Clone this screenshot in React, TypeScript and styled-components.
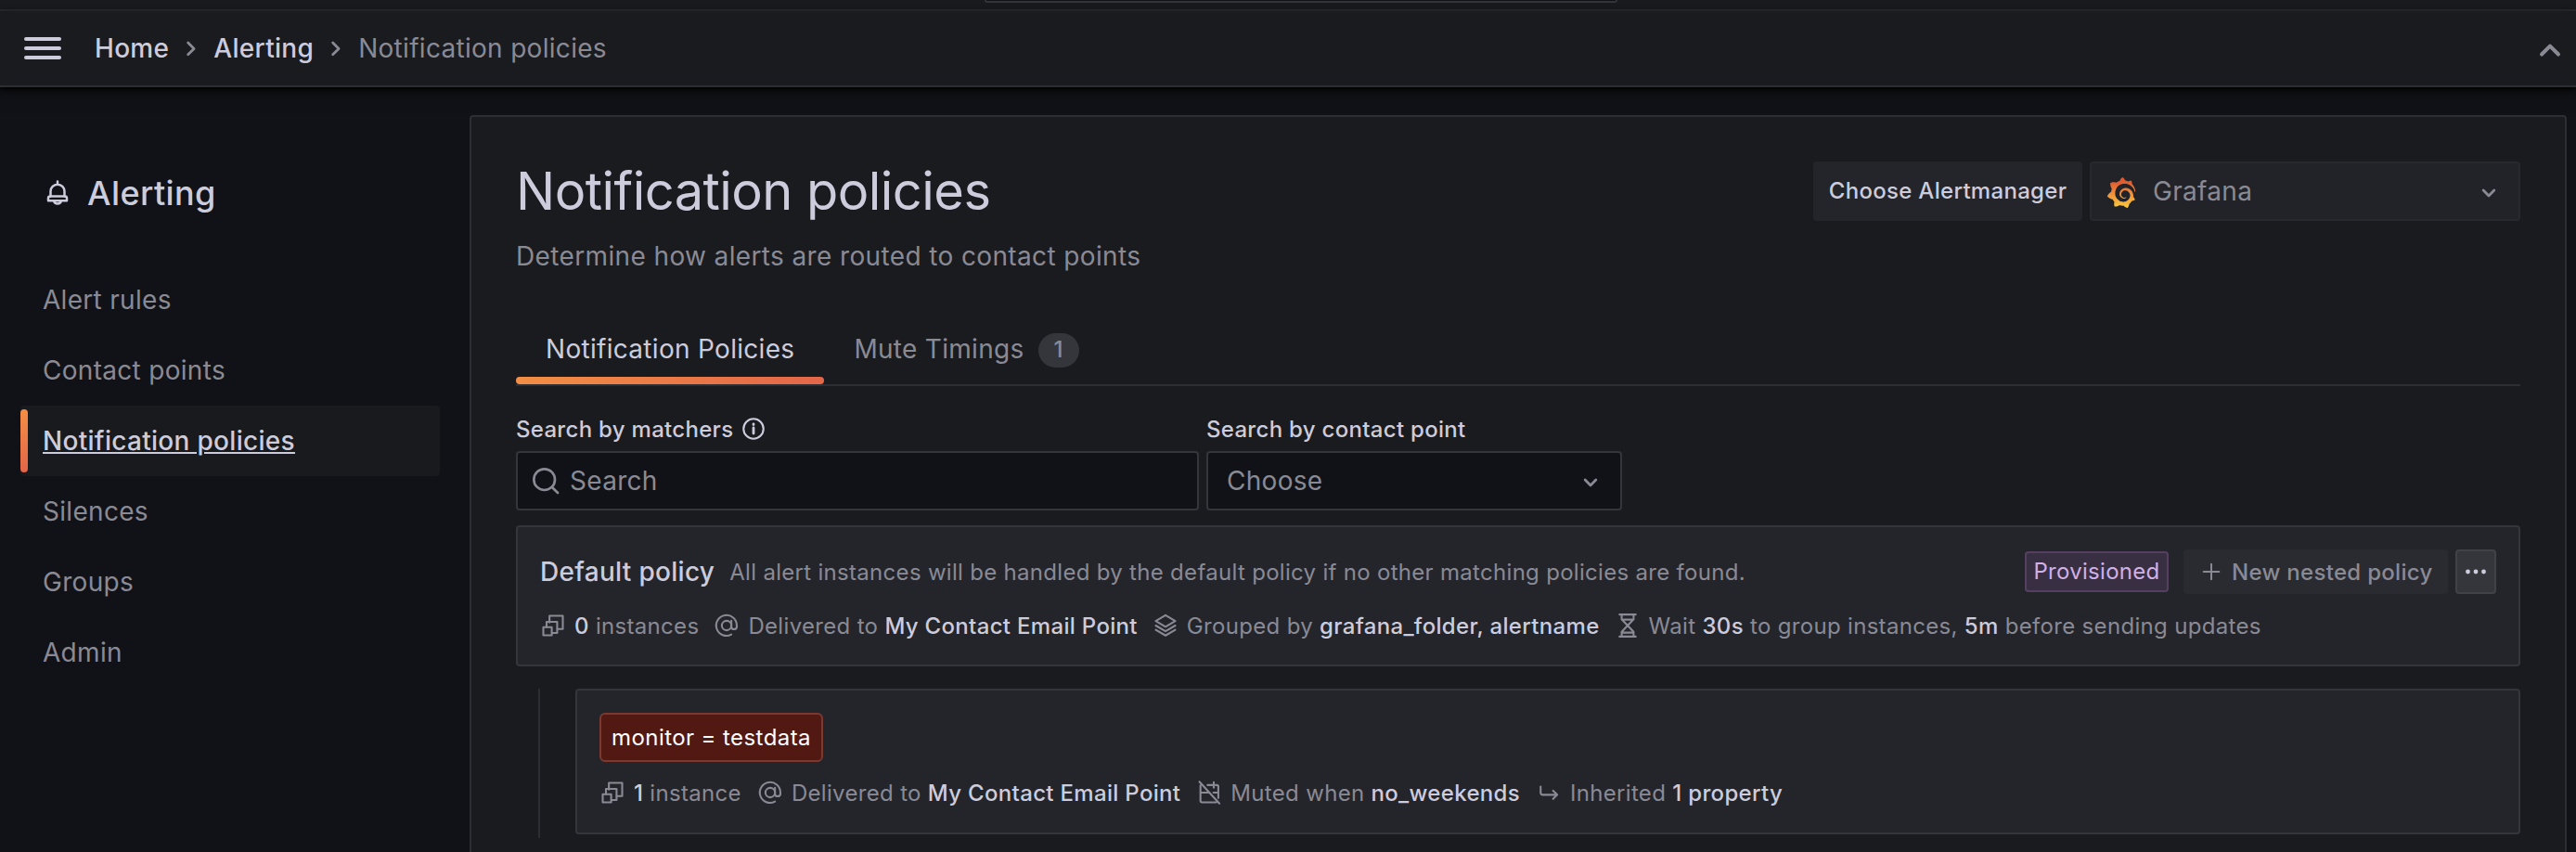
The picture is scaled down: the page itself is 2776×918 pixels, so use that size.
import React from 'react';
import styled, { createGlobalStyle, css } from 'styled-components';

const c = {
  canvas: '#111217',
  primary: '#1a1b1f',
  secondary: '#24252b',
  weak: '#2d2e33',
  medium: '#35363c',
  text: '#ccccdc',
  muted: '#8a8a95',
};

const Global = createGlobalStyle`
  * { box-sizing: border-box; }
  body { margin: 0; background: ${c.canvas}; color: ${c.text}; font-family: Inter, sans-serif; font-size: 28px; letter-spacing: 0.3px; overflow: hidden; }
  h1, h2, p { margin: 0; }
`;

const Page = styled.div`
  height: 918px;
  display: flex;
  flex-direction: column;
  overflow: hidden;
`;
const SearchStrip = styled.div`
  height: 12px;
  flex: none;
  display: flex;
  background: ${c.primary};
  border-bottom: 2px solid ${c.weak};
`;
const SearchEdge = styled.div`
  width: 682px;
  height: 3px;
  margin-left: 1061px;
  background: ${c.canvas};
  border: 2px solid ${c.medium};
  border-top: 0;
  border-radius: 0 0 4px 4px;
`;
const Toolbar = styled.header`
  height: 82px;
  flex: none;
  display: flex;
  align-items: center;
  padding: 0 12px 0 26px;
  background: ${c.primary};
  border-bottom: 2px solid ${c.weak};
  box-shadow: 0 2px 4px #000, 0 4px 16px rgba(0, 0, 0, 0.5);
  position: relative;
`;
const Menu = styled.div`
  width: 40px;
  display: grid;
  gap: 6px;
  margin-right: 36px;
  i { height: 4px; border-radius: 2px; background: ${c.text}; }
`;
const Crumbs = styled.nav`
  flex: 1;
  display: flex;
  align-items: center;
  gap: 8px;
`;
const Crumb = styled.span<{ $current?: boolean }>`
  color: ${(p) => (p.$current ? c.muted : c.text)};
  font-weight: ${(p) => (p.$current ? 400 : 500)};
`;
const Body = styled.div`
  flex: 1;
  min-height: 0;
  display: flex;
  padding: 30px 10px 0 22px;
`;
const Sidebar = styled.aside`
  width: 452px;
  margin-right: 32px;
  flex: none;
`;
const SideTitle = styled.h2`
  display: flex;
  align-items: center;
  gap: 17px;
  height: 64px;
  margin: 52px 0 45px 25px;
  font-size: 36px;
  font-weight: 500;
  letter-spacing: 0.4px;
`;
const NavItem = styled.a<{ $active?: boolean }>`
  display: flex;
  align-items: center;
  height: 76px;
  padding-left: 24px;
  color: ${c.muted};
  border-radius: 4px;
  position: relative;
  ${(p) => p.$active && css`
    color: ${c.text};
    font-weight: 500;
    text-decoration: underline;
    background: #181a1d;
    &::before {
      content: '';
      position: absolute;
      left: 0;
      top: 4px;
      bottom: 4px;
      width: 8px;
      border-radius: 4px;
      background: linear-gradient(180deg, #f28e45, #e36649);
    }
  `}
`;
const Main = styled.main`
  flex: 1;
  min-width: 0;
  padding: 48px 48px 0;
  background: ${c.primary};
  border: 2px solid ${c.weak};
  border-bottom: 0;
  border-radius: 4px 4px 0 0;
`;
const Head = styled.div`
  display: flex;
  justify-content: space-between;
`;
const Title = styled.h1`
  font-size: 56px;
  font-weight: 400;
  letter-spacing: -0.55px;
  line-height: 64px;
`;
const Subtitle = styled.p`
  margin-top: 16px;
  color: ${c.muted};
  line-height: 44px;
  letter-spacing: 0.37px;
`;
const Picker = styled.div`
  display: flex;
  gap: 8px;
`;
const PickerLabel = styled.div`
  width: 290px;
  height: 64px;
  line-height: 63px;
  text-align: center;
  font-size: 24px;
  font-weight: 500;
  background: ${c.secondary};
  border-radius: 4px;
`;
const Select = styled.div<{ $w: number; $disabled?: boolean }>`
  width: ${(p) => p.$w}px;
  height: 64px;
  display: flex;
  align-items: center;
  padding: 0 18px 0 ${(p) => (p.$disabled ? 16 : 20)}px;
  color: ${c.muted};
  background: ${(p) => (p.$disabled ? '#222328' : c.canvas)};
  border: 2px solid ${(p) => (p.$disabled ? '#28292e' : c.medium)};
  border-radius: 4px;
  span { flex: 1; }
`;
const LogoSlot = styled.div`
  padding-top: 3px;
  margin-right: 18px;
`;
const Tabs = styled.div`
  height: 78px;
  margin-top: 40px;
  display: flex;
  border-bottom: 2px solid ${c.weak};
`;
const Tab = styled.div<{ $active?: boolean }>`
  height: 76px;
  padding: 0 32px;
  display: flex;
  align-items: center;
  color: ${(p) => (p.$active ? c.text : c.muted)};
  position: relative;
  ${(p) => p.$active && css`
    &::after {
      content: '';
      position: absolute;
      left: 0;
      right: 0;
      bottom: 0;
      height: 8px;
      border-radius: 4px;
      background: linear-gradient(90deg, #f28e45, #e36649);
    }
  `}
`;
const Counter = styled.span`
  width: 44px;
  height: 37px;
  margin: 3px 0 0 15px;
  line-height: 36px;
  text-align: center;
  font-size: 24px;
  font-weight: 500;
  background: ${c.medium};
  border-radius: 19px;
`;
const Filters = styled.div`
  display: flex;
  gap: 8px;
  margin-top: 29px;
`;
const Label = styled.div`
  display: flex;
  align-items: center;
  gap: 8px;
  height: 34px;
  margin-bottom: 7px;
  font-size: 24px;
  font-weight: 500;
`;
const Input = styled.div`
  width: 736px;
  height: 64px;
  display: flex;
  align-items: center;
  gap: 10px;
  padding-left: 14px;
  color: ${c.muted};
  background: ${c.canvas};
  border: 2px solid ${c.medium};
  border-radius: 4px;
`;
const Card = styled.section`
  flex: 1;
  padding: 24px 24px 0;
  font-size: 24px;
  color: ${c.muted};
  background: ${c.secondary};
  border: 2px solid ${c.medium};
  border-radius: 4px;
`;
const RootCard = styled(Card)`
  height: 152px;
  margin-top: 16px;
`;
const CardHead = styled.div`
  display: flex;
  align-items: center;
  height: 48px;
`;
const PolicyName = styled.span`
  margin-right: 16px;
  color: ${c.text};
  font-size: 28px;
  font-weight: 500;
`;
const Spacer = styled.div`
  flex: 1;
`;
const Badge = styled.span`
  width: 155px;
  height: 44px;
  line-height: 39px;
  text-align: center;
  color: #d0b0e8;
  background: #392f42;
  border: 2px solid #56405f;
  border-radius: 4px;
`;
const NewButton = styled.span`
  width: 285px;
  height: 48px;
  margin: 0 8px 0 16px;
  padding-left: 18px;
  display: flex;
  align-items: center;
  gap: 10px;
  font-weight: 500;
  background: #2a2b30;
  border-radius: 4px;
`;
const MoreButton = styled.span`
  width: 44px;
  height: 48px;
  display: flex;
  align-items: center;
  justify-content: center;
  color: ${c.text};
  background: #35363b;
  border: 2px solid #414247;
  border-radius: 4px;
`;
const Meta = styled.div<{ $top: number; $gap?: number }>`
  display: flex;
  align-items: center;
  gap: ${(p) => p.$gap ?? 16}px;
  height: 36px;
  margin-top: ${(p) => p.$top}px;
  letter-spacing: 0.32px;
`;
const MetaItem = styled.span`
  display: flex;
  align-items: center;
  gap: 9px;
  white-space: pre;
  b { color: ${c.text}; font-weight: 500; }
`;
const Nested = styled.div`
  display: flex;
  height: 161px;
  margin: 24px 0 0 24px;
  padding: 0 0 4px 38px;
  border-left: 2px solid ${c.weak};
`;
const Matcher = styled.span`
  display: block;
  width: 241px;
  height: 53px;
  line-height: 49px;
  text-align: center;
  color: #fff;
  letter-spacing: 0.42px;
  background: #521913;
  border: 2px solid #7a3a30;
  border-radius: 6px;
`;
const Svg = styled.svg`
  flex: none;
  display: block;
`;

const paths: Record<string, React.ReactNode> = {
  right: <path d="M9.5 7.5l4.800 4.800-4.800 4.800" />,
  down: <path d="M7 11.200l5 5 5-5" />,
  up: <path d="M5.300 16.900l6.700-6.700 6.700 6.700" />,
  bell: <path d="M12 2v2M6 15v-4.500a6 6 0 0 1 12 0V15M5.500 14.800h13c1 0 1.500.8 1.500 1.700V18.500H4v-2c0-.9.5-1.700 1.500-1.700zM8.800 18.700a3.300 3.300 0 0 0 6.400 0" />,
  info: <><circle cx="12" cy="12" r="9.200" /><path d="M12 11v5.300M12 7.600v.6" strokeWidth="2.400" /></>,
  search: <><circle cx="11" cy="11" r="8.500" /><path d="M17.200 17.200l4.600 4.600" /></>,
  instances: <><path d="M8.700 9.200V3H21v12.200h-5" /><path d="M6 13.500V8.600h9.800v10.200h-4.500" /><rect x="3" y="13.500" width="7.800" height="7.500" /></>,
  at: <><circle cx="12" cy="12" r="4.400" /><path d="M16.400 7.600V13.600a2.600 2.600 0 0 0 5 0V12a9.500 9.500 0 1 0-5 8.300" /></>,
  layers: <><path d="M12 2.500l9 5.300-9 5.300-9-5.300z" /><path d="M3 12l9 5.200 9-5.200M3 16l9 5.200 9-5.200" /></>,
  hourglass: <path d="M4.500 1.800h15M4.500 22.200h15M6.500 1.800v4.400L12 12l5.500-5.800V1.800M6.500 22.200v-4.400L12 12l5.500 5.800v4.400M8 6.500h8M7.500 18.500h9" />,
  calendar: <path d="M3 2l18.500 20M4 5.500V19.500a1.500 1.500 0 0 0 1.500 1.500H18.500M4 12h7.500M10.500 5h6M16.300 2.500v5M18 5h1a1.500 1.500 0 0 1 1.500 1.500v10.500M16 12h4.500" />,
  inherit: <path d="M4.500 6.500v5.500a2 2 0 0 0 2 2h13M16 10.200l3.800 3.800-3.800 3.800" />,
  plus: <path d="M12 3.700v16.600M3.700 12h16.600" />,
  dots: <g fill="currentColor" stroke="none"><circle cx="3.500" cy="12" r="2.400" /><circle cx="12" cy="12" r="2.400" /><circle cx="20.500" cy="12" r="2.400" /></g>,
};

function Icon({ name, size = 28, w = 1.8, color = 'currentColor' }: { name: string; size?: number; w?: number; color?: string }) {
  return (
    <Svg width={size} height={size} viewBox="0 0 24 24" fill="none" stroke={color} strokeWidth={w} strokeLinecap="round" strokeLinejoin="round">
      {paths[name]}
    </Svg>
  );
}

function GrafanaLogo() {
  return (
    <Svg width="32" height="33" viewBox="0 0 351 365">
      <defs>
        <linearGradient id="grafana" x1="0" y1="1" x2="0" y2="0">
          <stop offset="0" stopColor="#f8cc3c" />
          <stop offset="0.5" stopColor="#ee8b3a" />
          <stop offset="0.8" stopColor="#e0602f" />
          <stop offset="1" stopColor="#dd5532" />
        </linearGradient>
      </defs>
      <path fill="url(#grafana)" d="M342,161.200c-0.600-6.100-1.600-13.100-3.600-20.900c-2-7.700-5-16.200-9.400-25c-4.400-8.800-10.100-17.900-17.500-26.800c-2.900-3.500-6.100-6.900-9.500-10.200c5.100-20.300-6.200-37.900-6.200-37.900c-19.500-1.200-31.900,6.100-36.500,9.400c-0.800-0.300-1.500-0.700-2.300-1c-3.300-1.300-6.700-2.600-10.300-3.700c-3.500-1.100-7.100-2.100-10.800-3c-3.700-0.900-7.400-1.600-11.200-2.200c-0.700-0.100-1.300-0.200-2-0.300c-8.500-27.200-32.900-38.600-32.900-38.600c-27.300,17.300-32.400,41.500-32.400,41.500s-0.100,0.500-0.300,1.400c-1.500,0.400-3,0.900-4.500,1.300c-2.100,0.600-4.200,1.400-6.200,2.200c-2.100,0.800-4.100,1.600-6.200,2.500c-4.100,1.800-8.200,3.800-12.200,6c-3.900,2.200-7.700,4.600-11.400,7.100c-0.500-0.200-1-0.400-1-0.400c-37.800-14.400-71.300,2.900-71.300,2.900c-3.100,40.200,15.100,65.500,18.700,70.100c-0.900,2.500-1.700,5-2.500,7.500c-2.800,9.100-4.900,18.400-6.200,28.100c-0.200,1.400-0.400,2.800-0.500,4.200C18.800,192.700,8.500,228,8.500,228c29.100,33.500,63.100,35.600,63.100,35.600c0,0,0.100-0.100,0.100-0.100c4.300,7.700,9.300,15,14.900,21.900c2.400,2.900,4.800,5.600,7.400,8.300c-10.600,30.400,1.500,55.600,1.500,55.600c32.400,1.200,53.700-14.200,58.200-17.700c3.200,1.100,6.500,2.100,9.800,2.900c10,2.600,20.200,4.100,30.400,4.500c2.500,0.100,5.100,0.200,7.600,0.100l1.200,0l0.800,0l1.600,0l1.600-0.100l0,0.100c15.300,21.800,42.100,24.900,42.100,24.900c19.100-20.100,20.200-40.100,20.200-44.400l0,0c0,0,0-0.100,0-0.300c0-0.400,0-0.600,0-0.600l0,0c0-0.300,0-0.600,0-0.900c4-2.800,7.800-5.800,11.400-9.100c7.600-6.900,14.300-14.800,19.900-23.300c0.500-0.800,1-1.600,1.500-2.400c21.600,1.200,36.900-13.400,36.900-13.400c-3.600-22.500-16.400-33.500-19.100-35.600l0,0c0,0-0.100-0.100-0.300-0.200c-0.200-0.100-0.200-0.200-0.200-0.200c0,0,0,0,0,0c-0.100-0.100-0.300-0.200-0.500-0.300c0.100-1.400,0.200-2.700,0.300-4.100c0.200-2.400,0.200-4.900,0.200-7.300l0-1.800l0-0.900l0-0.500c0-0.600,0-0.400,0-0.600l-0.100-1.500l-0.100-2c0-0.700-0.100-1.300-0.200-1.900c-0.100-0.600-0.100-1.300-0.200-1.900l-0.200-1.900l-0.300-1.900c-0.400-2.500-0.800-4.900-1.400-7.400c-2.300-9.700-6.100-18.900-11-27.200c-5-8.300-11.200-15.600-18.300-21.800c-7-6.200-14.900-11.200-23.100-14.900c-8.300-3.700-16.900-6.100-25.500-7.200c-4.300-0.600-8.600-0.800-12.900-0.700l-1.600,0l-0.400,0c-0.100,0-0.600,0-0.500,0l-0.700,0l-1.600,0.100c-0.600,0-1.200,0.100-1.700,0.100c-2.200,0.200-4.400,0.500-6.500,0.900c-8.600,1.600-16.700,4.700-23.800,9c-7.100,4.300-13.300,9.600-18.300,15.600c-5,6-8.900,12.700-11.600,19.600c-2.700,6.900-4.200,14.100-4.600,21c-0.100,1.700-0.100,3.500-0.100,5.200c0,0.400,0,0.900,0,1.300l0.100,1.400c0.100,0.800,0.100,1.700,0.200,2.500c0.300,3.500,1,6.900,1.900,10.100c1.900,6.500,4.900,12.400,8.600,17.400c3.700,5,8.200,9.100,12.900,12.400c4.700,3.200,9.800,5.500,14.800,7c5,1.500,10,2.100,14.700,2.100c0.600,0,1.200,0,1.700,0c0.300,0,0.600,0,0.900,0c0.300,0,0.600,0,0.900-0.100c0.500,0,1-0.100,1.500-0.100c0.100,0,0.300,0,0.400-0.100l0.500-0.100c0.300,0,0.600-0.100,0.900-0.100c0.600-0.100,1.100-0.200,1.700-0.300c0.600-0.100,1.100-0.200,1.600-0.400c1.100-0.200,2.100-0.600,3.100-0.900c2-0.700,4-1.500,5.700-2.400c1.800-0.900,3.400-2,5-3c0.400-0.300,0.900-0.600,1.300-1c1.600-1.300,1.900-3.700,0.600-5.300c-1.100-1.400-3.100-1.800-4.700-0.900c-0.400,0.200-0.800,0.400-1.200,0.600c-1.400,0.700-2.800,1.300-4.300,1.800c-1.500,0.500-3.100,0.900-4.700,1.200c-0.800,0.100-1.600,0.200-2.500,0.300c-0.400,0-0.800,0.100-1.300,0.100c-0.400,0-0.900,0-1.200,0c-0.400,0-0.800,0-1.200,0c-0.500,0-1,0-1.500-0.100c0,0-0.300,0-0.100,0l-0.200,0l-0.300,0c-0.200,0-0.500,0-0.700-0.100c-0.500-0.100-0.900-0.100-1.400-0.200c-3.700-0.500-7.400-1.600-10.900-3.200c-3.600-1.600-7-3.800-10.100-6.600c-3.100-2.800-5.800-6.100-7.900-9.900c-2.100-3.800-3.600-8-4.300-12.400c-0.300-2.200-0.500-4.500-0.400-6.700c0-0.600,0.100-1.200,0.100-1.800c0,0.200,0-0.100,0-0.100l0-0.200l0-0.500c0-0.300,0.100-0.600,0.100-0.900c0.100-1.200,0.300-2.400,0.500-3.600c1.700-9.600,6.500-19,13.900-26.100c1.900-1.800,3.900-3.400,6-4.900c2.100-1.500,4.400-2.800,6.800-3.900c2.400-1.100,4.800-2,7.400-2.700c2.500-0.700,5.100-1.100,7.800-1.400c1.300-0.100,2.600-0.200,4-0.200c0.400,0,0.600,0,0.900,0l1.100,0l0.700,0c0.300,0,0,0,0.100,0l0.300,0l1.100,0.100c2.900,0.200,5.700,0.600,8.500,1.300c5.600,1.200,11.100,3.300,16.200,6.100c10.200,5.700,18.900,14.500,24.200,25.100c2.700,5.300,4.600,11,5.500,16.900c0.200,1.500,0.400,3,0.500,4.500l0.100,1.100l0.100,1.100c0,0.400,0,0.800,0,1.100c0,0.400,0,0.800,0,1.100l0,1l0,1.100c0,0.700-0.100,1.900-0.100,2.600c-0.100,1.600-0.300,3.300-0.500,4.900c-0.200,1.600-0.500,3.200-0.800,4.800c-0.300,1.600-0.700,3.200-1.100,4.700c-0.800,3.100-1.800,6.200-3,9.300c-2.400,6-5.600,11.800-9.400,17.100c-7.700,10.600-18.200,19.200-30.200,24.700c-6,2.700-12.300,4.700-18.800,5.700c-3.200,0.600-6.500,0.900-9.800,1l-0.600,0l-0.500,0l-1.100,0l-1.600,0l-0.800,0c0.400,0-0.100,0-0.100,0l-0.300,0c-1.800,0-3.500-0.100-5.300-0.300c-7-0.500-13.900-1.800-20.700-3.700c-6.700-1.900-13.200-4.600-19.400-7.800c-12.300-6.600-23.400-15.600-32-26.500c-4.300-5.400-8.100-11.300-11.200-17.400c-3.100-6.100-5.600-12.600-7.400-19.100c-1.800-6.600-2.900-13.300-3.400-20.100l-0.100-1.300l0-0.300l0-0.300l0-0.600l0-1.100l0-0.300l0-0.400l0-0.800l0-1.600l0-0.300c0,0,0,0.100,0-0.100l0-0.600c0-0.800,0-1.700,0-2.500c0.100-3.300,0.400-6.800,0.800-10.200c0.400-3.400,1-6.900,1.700-10.300c0.700-3.400,1.500-6.800,2.500-10.200c1.900-6.700,4.300-13.200,7.100-19.300c5.700-12.200,13.100-23.100,22-31.800c2.200-2.200,4.500-4.200,6.900-6.200c2.400-1.900,4.900-3.700,7.500-5.400c2.500-1.700,5.200-3.200,7.900-4.600c1.300-0.700,2.700-1.400,4.100-2c0.700-0.300,1.400-0.600,2.100-0.900c0.700-0.300,1.400-0.600,2.100-0.900c2.800-1.200,5.700-2.200,8.700-3.100c0.700-0.200,1.500-0.400,2.200-0.700c0.700-0.200,1.500-0.400,2.200-0.600c1.500-0.400,3-0.800,4.500-1.100c0.700-0.200,1.500-0.300,2.300-0.500c0.800-0.200,1.500-0.300,2.300-0.500c0.800-0.100,1.500-0.300,2.300-0.400l1.100-0.200l1.200-0.200c0.800-0.100,1.500-0.200,2.300-0.300c0.900-0.100,1.700-0.200,2.600-0.300c0.700-0.100,1.900-0.200,2.600-0.300c0.500-0.100,1.100-0.100,1.600-0.200l1.100-0.100l0.500-0.100l0.600,0c0.900-0.100,1.700-0.100,2.600-0.200l1.300-0.100c0,0,0.500,0,0.100,0l0.300,0l0.600,0c0.700,0,1.500-0.100,2.200-0.100c2.900-0.100,5.900-0.100,8.800,0c5.800,0.200,11.500,0.900,17,1.900c11.100,2.100,21.500,5.600,31,10.300c9.500,4.600,17.900,10.300,25.300,16.500c0.500,0.400,0.900,0.800,1.400,1.200c0.400,0.400,0.900,0.800,1.300,1.200c0.900,0.800,1.700,1.600,2.600,2.400c0.900,0.800,1.700,1.600,2.500,2.400c0.800,0.800,1.600,1.600,2.400,2.500c3.100,3.300,6,6.600,8.600,10c5.200,6.700,9.400,13.500,12.700,19.900c0.200,0.400,0.400,0.800,0.600,1.200c0.200,0.400,0.400,0.800,0.600,1.200c0.400,0.800,0.800,1.600,1.100,2.400c0.400,0.800,0.700,1.500,1.100,2.300c0.300,0.800,0.700,1.500,1,2.300c1.200,3,2.400,5.900,3.300,8.600c1.500,4.400,2.600,8.300,3.500,11.700c0.300,1.400,1.600,2.300,3,2.100c1.500-0.100,2.600-1.300,2.600-2.800C342.600,170.400,342.500,166.100,342,161.200z" />
    </Svg>
  );
}

const nav = ['Alert rules', 'Contact points', 'Notification policies', 'Silences', 'Groups', 'Admin'];

export default function App() {
  return (
    <Page>
      <Global />
      <SearchStrip><SearchEdge /></SearchStrip>
      <Toolbar>
        <Menu><i /><i /><i /></Menu>
        <Crumbs>
          <Crumb>Home</Crumb>
          <Icon name="right" size={32} w={2.1} color={c.muted} />
          <Crumb>Alerting</Crumb>
          <Icon name="right" size={32} w={2.1} color={c.muted} />
          <Crumb $current>Notification policies</Crumb>
        </Crumbs>
        <Icon name="up" size={32} w={3} color={c.muted} />
      </Toolbar>
      <Body>
        <Sidebar>
          <SideTitle><Icon name="bell" size={30} w={2} />Alerting</SideTitle>
          {nav.map((n) => <NavItem key={n} $active={n === 'Notification policies'}>{n}</NavItem>)}
        </Sidebar>
        <Main>
          <Head>
            <div>
              <Title>Notification policies</Title>
              <Subtitle>Determine how alerts are routed to contact points</Subtitle>
            </div>
            <Picker>
              <PickerLabel>Choose Alertmanager</PickerLabel>
              <Select $w={464} $disabled><LogoSlot><GrafanaLogo /></LogoSlot><span>Grafana</span><Icon name="down" w={2.4} /></Select>
            </Picker>
          </Head>
          <Tabs>
            <Tab $active>Notification Policies</Tab>
            <Tab>Mute Timings<Counter>1</Counter></Tab>
          </Tabs>
          <Filters>
            <div>
              <Label>Search by matchers<Icon name="info" /></Label>
              <Input><Icon name="search" size={32} w={2} />Search</Input>
            </div>
            <div>
              <Label>Search by contact point</Label>
              <Select $w={448}><span>Choose</span><Icon name="down" w={2.4} /></Select>
            </div>
          </Filters>
          <RootCard>
            <CardHead>
              <PolicyName>Default policy</PolicyName>
              All alert instances will be handled by the default policy if no other matching policies are found.
              <Spacer />
              <Badge>Provisioned</Badge>
              <NewButton><Icon name="plus" size={24} w={2} />New nested policy</NewButton>
              <MoreButton><Icon name="dots" size={24} /></MoreButton>
            </CardHead>
            <Meta $top={16}>
              <MetaItem><Icon name="instances" /><span><b>0</b> instances</span></MetaItem>
              <MetaItem><Icon name="at" /><span>Delivered to <b>My Contact Email Point</b></span></MetaItem>
              <MetaItem><Icon name="layers" /><span>Grouped by <b>grafana_folder, alertname</b></span></MetaItem>
              <MetaItem><Icon name="hourglass" /><span>Wait <b>30s</b> to group instances, <b>5m</b> before sending updates</span></MetaItem>
            </Meta>
          </RootCard>
          <Nested>
            <Card>
              <Matcher>monitor = testdata</Matcher>
              <Meta $top={15} $gap={17}>
                <MetaItem><Icon name="instances" /><span><b>1</b> instance</span></MetaItem>
                <MetaItem><Icon name="at" /><span>Delivered to <b>My Contact Email Point</b></span></MetaItem>
                <MetaItem><Icon name="calendar" /><span>Muted when <b>no_weekends</b></span></MetaItem>
                <MetaItem><Icon name="inherit" /><span>Inherited <b>1 property</b></span></MetaItem>
              </Meta>
            </Card>
          </Nested>
        </Main>
      </Body>
    </Page>
  );
}
